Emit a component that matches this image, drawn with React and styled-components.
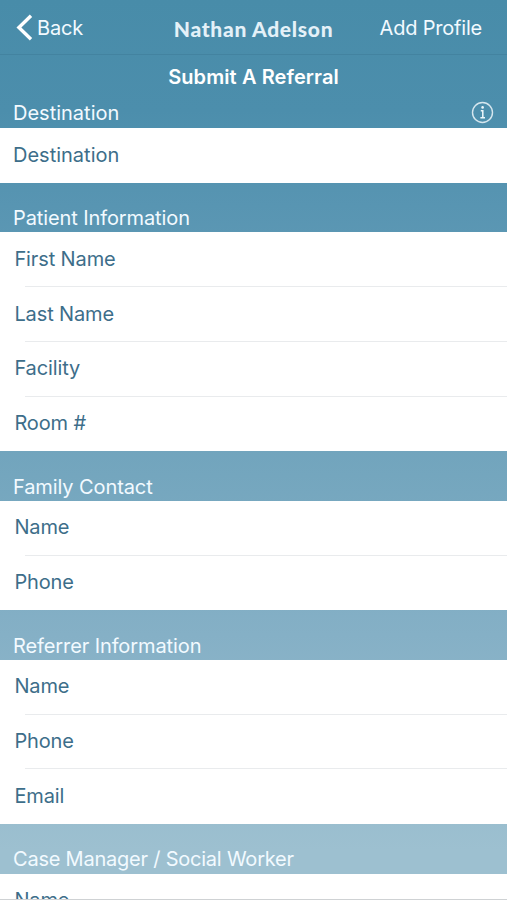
import React from 'react';
import styled, { createGlobalStyle } from 'styled-components';

const GlobalStyle = createGlobalStyle`
  * {
    box-sizing: border-box;
  }

  body {
    margin: 0;
    overflow: hidden;
  }
`;

const Screen = styled.main`
  display: flex;
  flex-direction: column;
  height: 900px;
  overflow: hidden;
  border-bottom: 1px solid #cfd2d4;
  background: linear-gradient(#488ca9 0, #4c8eac 110px, #5895b2 205px, #74a6be 475px, #85b0c6 635px, #9dc0d0 850px);
  font-family: Inter, "Liberation Sans", sans-serif;
  font-size: 20px;
  line-height: 26px;
  color: #f2faff;
`;

const NavBar = styled.header`
  flex: none;
  display: grid;
  grid-template-columns: 1fr auto 1fr;
  align-items: center;
  height: 55px;
  padding: 1px 25px 0 16px;
  border-bottom: 1px solid #4383a0;
`;

const BackButton = styled.a`
  display: flex;
  align-items: center;
  gap: 4px;
  letter-spacing: -0.2px;
`;

const Logo = styled.div`
  margin-left: 9px;
  padding-top: 3px;
  font-family: Lato, sans-serif;
  font-size: 21px;
  font-weight: 900;
  letter-spacing: 0.7px;
  color: #e4f1f8;
`;

const NavAction = styled.a`
  justify-self: end;
  white-space: nowrap;
  letter-spacing: -0.2px;
`;

const Title = styled.h1`
  flex: none;
  margin: 9px 0 0;
  font-size: 20px;
  font-weight: 600;
  line-height: 26px;
  letter-spacing: 0.1px;
  text-align: center;
  color: #ffffff;
`;

const SectionHeader = styled.div`
  flex: none;
  display: flex;
  align-items: flex-end;
  justify-content: space-between;
  height: ${props => props.$height || 49.4}px;
  padding: 0 13px ${props => props.$bottom ?? 1.2}px;
  letter-spacing: ${props => props.$spacing ?? -0.1}px;
`;

const Rows = styled.ul`
  flex: none;
  margin: 0;
  padding: 0;
  list-style: none;
  background: #ffffff;
`;

const Row = styled.li`
  display: flex;
  align-items: center;
  height: 54.8px;
  padding: 0 0 1.4px ${props => props.$inset || 14.4}px;
  letter-spacing: ${props => props.$spacing ?? -0.12}px;
  color: #3d6e8a;

  /* the separator starts further right than the label */
  & + &,
  &:not(:last-child) {
    background: linear-gradient(#e9ebed, #e9ebed) 25px 100% / 100% 1px no-repeat;
  }

  &:last-child {
    background: none;
  }
`;

const BackIcon = () => (
  <svg width="17" height="27" viewBox="0 0 17 27" fill="none" stroke="#fff" strokeWidth="3.4">
    <path d="M15 1.7 2.9 13.5 15 25.3" />
  </svg>
);

const InfoSvg = styled.svg`
  margin-bottom: 2px;
`;

const InfoIcon = () => (
  <InfoSvg width="23" height="23" viewBox="0 0 23 23" fill="none" stroke="#d5e6ee" strokeWidth="1.4">
    <circle cx="11.5" cy="11.5" r="10" />
    <circle cx="11.6" cy="6.4" r="1.3" fill="#eef7fb" stroke="none" />
    <path d="M9.8 9.7h2v6.8M9.4 16.8h4.6" stroke="#eef7fb" strokeWidth="1.5" />
  </InfoSvg>
);

const sections = [
  { title: 'Patient Information', fields: ['First Name', 'Last Name', 'Facility', 'Room #'] },
  { title: 'Family Contact', fields: ['Name', 'Phone'] },
  { title: 'Referrer Information', fields: ['Name', 'Phone', 'Email'] },
  { title: 'Case Manager / Social Worker', fields: ['Name'], spacing: -0.22 },
];

export default function App() {
  return (
    <>
      <GlobalStyle />
      <Screen>
        <NavBar>
          <BackButton><BackIcon />Back</BackButton>
          <Logo>Nathan Adelson</Logo>
          <NavAction>Add Profile</NavAction>
        </NavBar>
        <Title>Submit A Referral</Title>
        <SectionHeader $height={38} $bottom={2} $spacing={0}>
          Destination
          <InfoIcon />
        </SectionHeader>
        <Rows>
          <Row $inset={13} $spacing={0}>Destination</Row>
        </Rows>
        {sections.map(section => (
          <React.Fragment key={section.title}>
            <SectionHeader $spacing={section.spacing}>{section.title}</SectionHeader>
            <Rows>
              {section.fields.map(field => <Row key={field}>{field}</Row>)}
            </Rows>
          </React.Fragment>
        ))}
      </Screen>
    </>
  );
}
